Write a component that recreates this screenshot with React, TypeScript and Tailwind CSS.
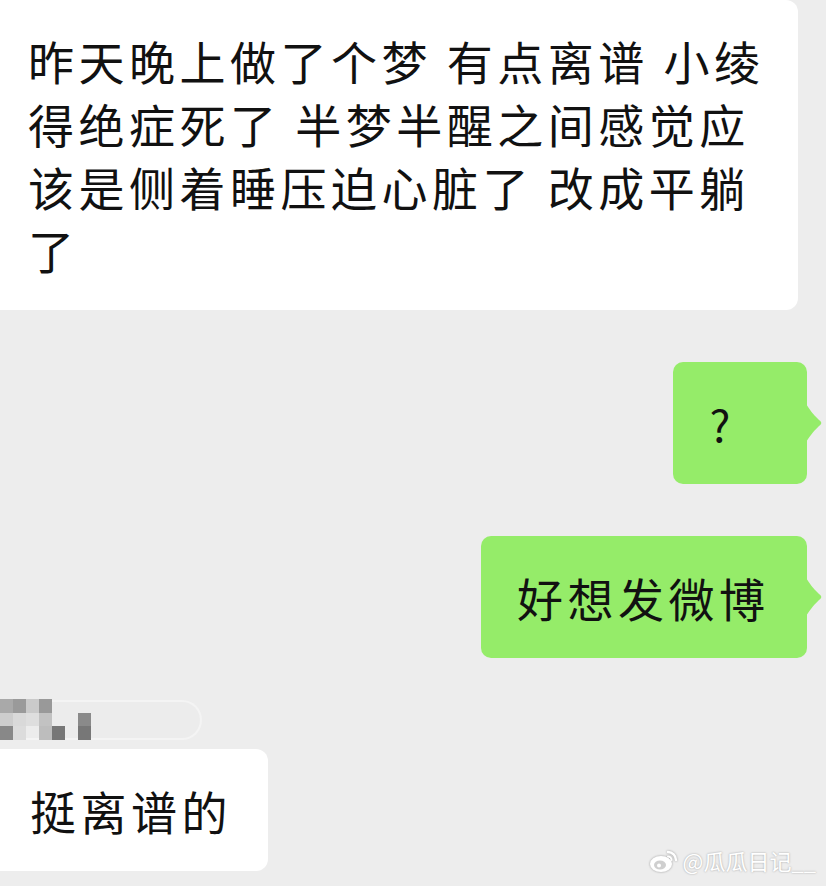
import React from "react";

const font = { fontFamily: '"Noto Sans CJK SC", "Noto Sans", sans-serif' };

function Tail() {
  return (
    <svg className="absolute right-[-16px] top-1/2 -translate-y-1/2" width="17" height="38" viewBox="0 0 17 38">
      <path d="M0 0 C4 6 6 9 13 16 C16 18 16 20 13 22 C6 29 4 32 0 38 Z" fill="#95ec69" />
    </svg>
  );
}

const blocks: { x: number; y: number; c: string }[] = [
  { x: 0, y: 0, c: "#a9a9a9" },
  { x: 1, y: 0, c: "#9a9a9a" },
  { x: 2, y: 0, c: "#cacaca" },
  { x: 3, y: 0, c: "#999999" },
  { x: 0, y: 1, c: "#cdcdcd" },
  { x: 1, y: 1, c: "#d9d9d9" },
  { x: 2, y: 1, c: "#dedede" },
  { x: 3, y: 1, c: "#c2c2c2" },
  { x: 6, y: 1, c: "#8a8a8a" },
  { x: 0, y: 2, c: "#888888" },
  { x: 1, y: 2, c: "#dcdcdc" },
  { x: 3, y: 2, c: "#bdbdbd" },
  { x: 4, y: 2, c: "#777777" },
  { x: 6, y: 2, c: "#777777" },
];

export default function App() {
  return (
    <div className="relative w-[826px] h-[886px] overflow-hidden bg-[#ededed] text-[#111]" style={font}>
      <div className="flex flex-col">
        {/* incoming long message */}
        <div className="w-[798px] rounded-r-[12px] bg-white pl-[28px] pt-[29px] pb-[29px] text-[46px] leading-[63px] tracking-[4.5px]">
          昨天晚上做了个梦 有点离谱 小绫
          <br />
          得绝症死了 半梦半醒之间感觉应
          <br />
          该是侧着睡压迫心脏了 改成平躺
          <br />了
        </div>

        {/* outgoing */}
        <div className="mt-[52px] flex justify-end pr-[19px]">
          <div className="relative flex h-[122px] w-[134px] items-center justify-center rounded-[10px] bg-[#95ec69] text-[44px]">
            <span className="-ml-[40px]">?</span>
            <Tail />
          </div>
        </div>
        <div className="mt-[52px] flex justify-end pr-[19px]">
          <div className="relative flex h-[122px] w-[326px] items-center rounded-[10px] bg-[#95ec69] pl-[36px] text-[46px] tracking-[4.5px]">
            好想发微博
            <Tail />
          </div>
        </div>

        {/* sender name (pixelated) */}
        <div className="mt-[42px] relative h-[40px] w-[202px] rounded-r-full border-2 border-[#f4f4f4] border-l-0 bg-[#ececec]">
          <div className="absolute left-0 top-[-3px] grid grid-cols-[repeat(7,13px)] grid-rows-[repeat(3,13.5px)]">
            {blocks.map((b, i) => (
              <div
                key={i}
                style={{ gridColumnStart: b.x + 1, gridRowStart: b.y + 1, backgroundColor: b.c }}
              />
            ))}
          </div>
        </div>

        {/* incoming short */}
        <div className="mt-[9px] flex h-[122px] w-[268px] items-center rounded-r-[12px] bg-white pl-[30px] text-[46px] tracking-[4.5px]">
          挺离谱的
        </div>
      </div>

      {/* watermark */}
      <div className="absolute right-[10px] bottom-[9px] flex items-center gap-[4px] text-[22px] text-white [text-shadow:0_0_2px_rgba(0,0,0,0.35)]">
        <svg width="30" height="26" viewBox="0 0 30 26" className="drop-shadow-[0_0_1px_rgba(0,0,0,0.35)]">
          <ellipse cx="12" cy="16" rx="11" ry="8" fill="white" />
          <ellipse cx="11" cy="17" rx="6" ry="4.5" fill="#cfcfcf" />
          <circle cx="10" cy="17.5" r="2" fill="white" />
          <path d="M19 4 A8 8 0 0 1 27 12" stroke="white" strokeWidth="2.4" fill="none" strokeLinecap="round" />
          <path d="M19 8.5 A3.5 3.5 0 0 1 22.5 12" stroke="white" strokeWidth="2" fill="none" strokeLinecap="round" />
        </svg>
        <span>@瓜瓜日记__</span>
      </div>
    </div>
  );
}
